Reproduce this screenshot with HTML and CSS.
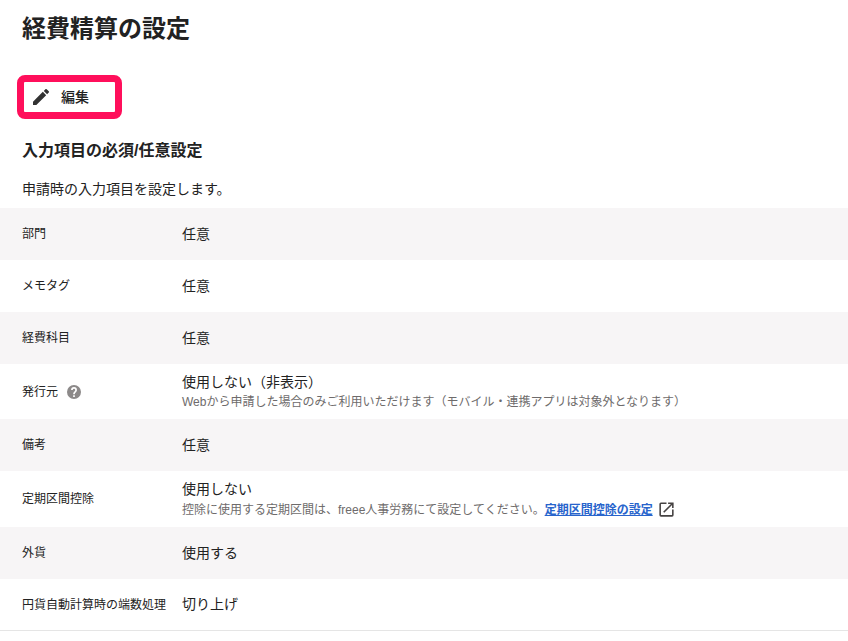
FILE: index.html
```html
<!DOCTYPE html>
<html lang="ja">
<head>
<meta charset="utf-8">
<title>経費精算の設定</title>
<link rel="stylesheet" href="styles.css">
</head>
<body>
<main>
  <header class="intro">
    <h1>経費精算の設定</h1>
    <button class="edit" type="button">
      <svg class="edit-icon" viewBox="3 3 18 18" aria-hidden="true"><path d="M3 17.25V21h3.75L17.81 9.94l-3.75-3.75L3 17.25zM20.71 7.04a1 1 0 0 0 0-1.41l-2.34-2.34a1 1 0 0 0-1.41 0l-1.83 1.83 3.75 3.75 1.83-1.83z"/></svg>
      編集
    </button>
    <h2>入力項目の必須/任意設定</h2>
    <p>申請時の入力項目を設定します。</p>
  </header>
  <table class="settings">
    <tbody>
      <tr><th scope="row">部門</th><td>任意</td></tr>
      <tr><th scope="row">メモタグ</th><td>任意</td></tr>
      <tr><th scope="row">経費科目</th><td>任意</td></tr>
      <tr>
        <th scope="row"><div class="label">発行元
          <svg class="help-icon" viewBox="2 2 20 20" aria-hidden="true"><path d="M12 2a10 10 0 1 0 0 20 10 10 0 0 0 0-20zm1.2 17h-2.4v-2.4h2.4V19zm2.1-7.4-.9 1c-.8.8-1.2 1.4-1.2 2.600h-2.400v-.5c0-1.100.5-2.100 1.200-2.800l1.200-1.300c.4-.3.6-.8.6-1.400a1.800 1.800 0 0 0-3.600 0H7.800a4.200 4.200 0 0 1 8.400 0c0 .9-.4 1.800-.9 2.400z"/></svg>
        </div></th>
        <td>使用しない（非表示）<div class="note">Webから申請した場合のみご利用いただけます（モバイル・連携アプリは対象外となります）</div></td>
      </tr>
      <tr><th scope="row">備考</th><td>任意</td></tr>
      <tr>
        <th scope="row">定期区間控除</th>
        <td>使用しない<div class="note">控除に使用する定期区間は、freee人事労務にて設定してください。<a href="#">定期区間控除の設定</a><svg class="open-icon" viewBox="0 0 24 24" aria-hidden="true"><path d="M19 19H5V5h7V3H5a2 2 0 0 0-2 2v14a2 2 0 0 0 2 2h14a2 2 0 0 0 2-2v-7h-2v7zM14 3v2h3.590l-9.830 9.830 1.410 1.410L19 6.410V10h2V3h-7z"/></svg></div></td>
      </tr>
      <tr><th scope="row">外貨</th><td>使用する</td></tr>
      <tr><th scope="row">円貨自動計算時の端数処理</th><td>切り上げ</td></tr>
    </tbody>
  </table>
</main>
</body>
</html>
```
FILE: styles.css
```css
* {
  box-sizing: border-box;
}

body {
  margin: 0;
  background: #fff;
  color: #222;
  font-family: "Liberation Sans", "Noto Sans CJK JP", sans-serif;
  font-size: 14px;
  line-height: 21px;
}

.intro {
  display: flex;
  flex-direction: column;
  align-items: flex-start;
  padding: 11px 22px 8px;
}

h1 {
  margin: 0 0 28px;
  font-size: 24px;
  line-height: 36px;
}

.edit {
  display: flex;
  align-items: center;
  gap: 12px;
  height: 44px;
  margin: 0 0 20px -5px;
  padding: 0 26px 0 9px;
  border: 7px solid #ff0f5b;
  border-radius: 8px;
  background: #fff;
  color: #222;
  font: inherit;
  font-weight: 500;
}

.edit-icon {
  width: 16px;
  height: 16px;
  fill: #323232;
}

h2 {
  margin: 0 0 16px;
  font-size: 16px;
  line-height: 24px;
}

p {
  margin: 0;
}

.settings {
  width: 100%;
  border-collapse: separate;
  border-spacing: 0;
  border-bottom: 1px solid #e5e5e5;
}

.settings tr {
  height: 52px;
}

.settings tr:last-child {
  height: 51px;
}

.settings tr:nth-child(odd) {
  background: #f7f5f6;
}

th,
td {
  padding: 8px 0;
  text-align: left;
  vertical-align: middle;
}

th {
  width: 182px;
  padding-left: 22px;
  font-size: 12px;
  font-weight: 400;
  line-height: 18px;
}

.label {
  display: flex;
  align-items: center;
  gap: 9px;
}

.help-icon {
  width: 14px;
  height: 14px;
  fill: #8c8989;
}

.note {
  display: flex;
  align-items: center;
  color: #6e6b6b;
  font-size: 12px;
  line-height: 18px;
}

.note a {
  color: #2864cc;
  font-weight: 700;
}

.open-icon {
  width: 19px;
  height: 19px;
  margin-left: 4px;
  fill: #464343;
}
```
